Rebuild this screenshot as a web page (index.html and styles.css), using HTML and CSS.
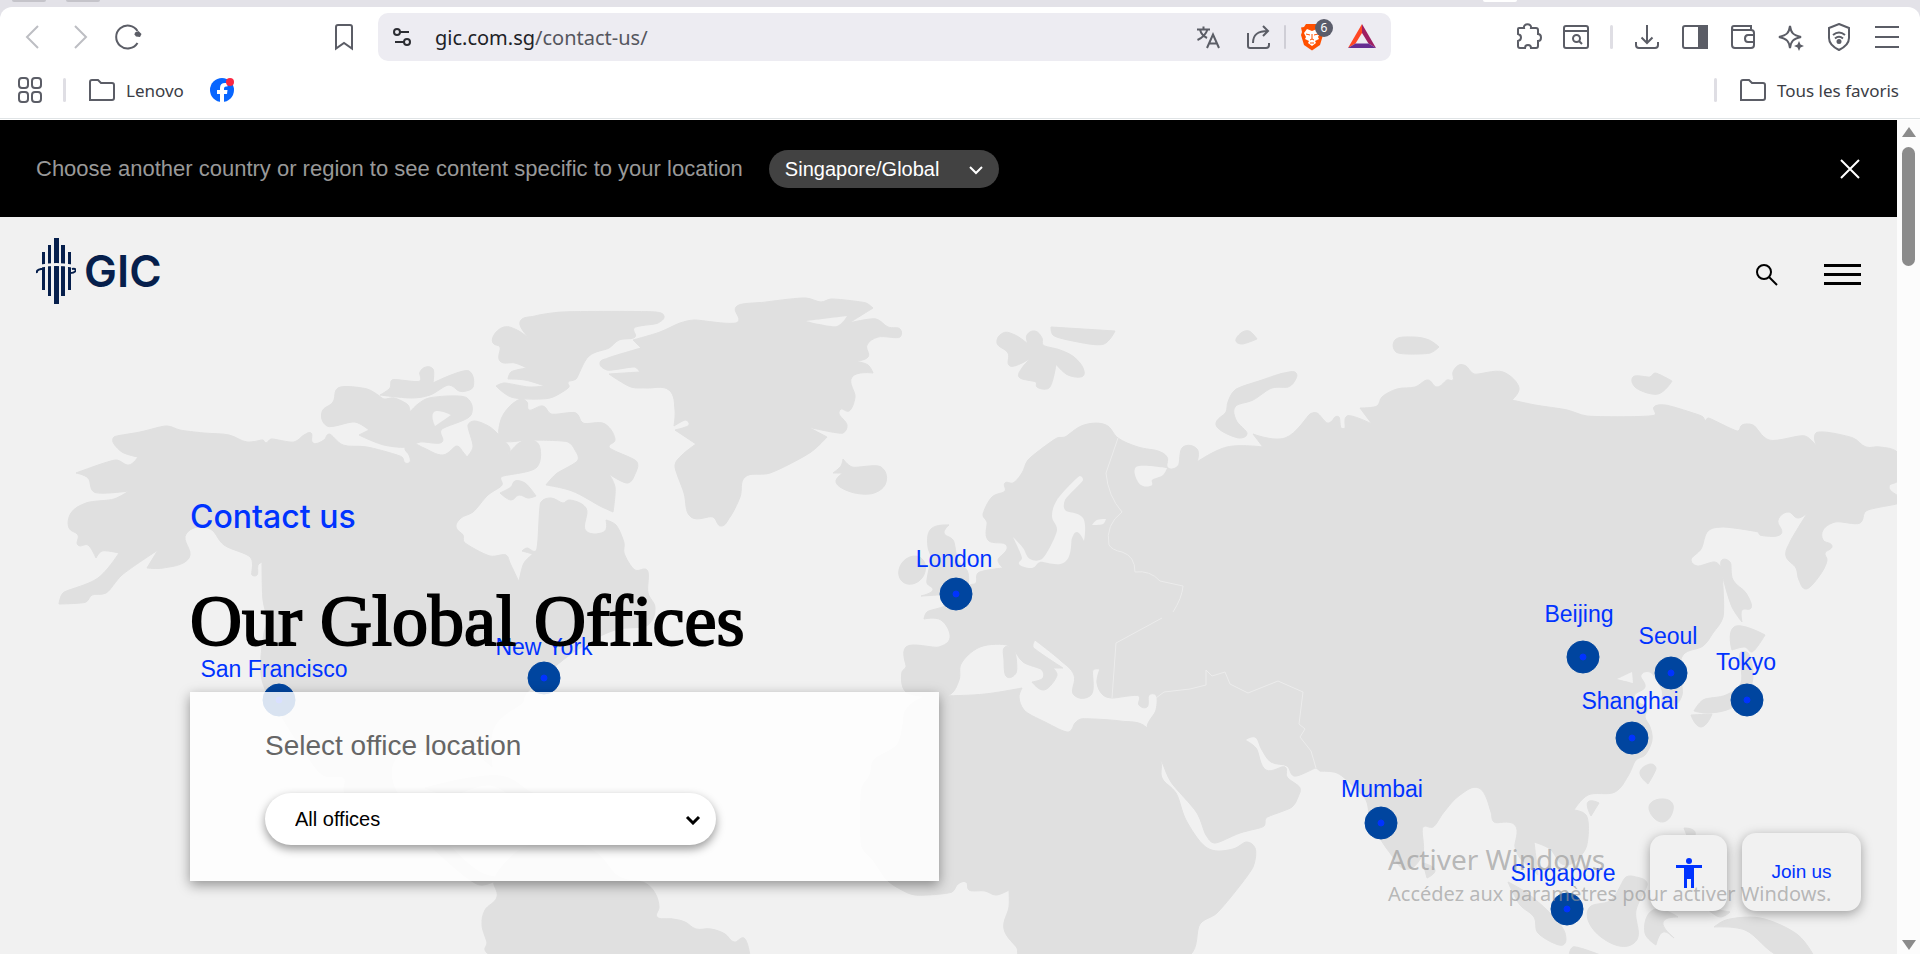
FILE: index.html
```html
<!DOCTYPE html>
<html lang="en">
<head>
<meta charset="utf-8">
<title>Contact us | GIC</title>
<link rel="stylesheet" href="styles.css">
</head>
<body>
<div class="tabstrip"><span class="tab-edge"></span><span class="tab-edge"></span><span class="tab-edge tab-active"></span></div>
<header class="chrome">
  <div class="toolbar">
    <div class="nav-group">
      <button class="icon-btn faded" aria-label="Back"><svg viewBox="0 0 28 28"><path d="M20 3 9 14 20 25"/></svg></button>
      <button class="icon-btn faded" aria-label="Forward"><svg viewBox="0 0 28 28"><path d="M9 3 20 14 9 25"/></svg></button>
      <button class="icon-btn" aria-label="Reload"><svg viewBox="0 0 28 28"><path d="M23.500 20A11.500 11.500 0 1 1 23.500 8"/><path d="M20.500 11.500 21 9.500 24.500 8 27.500 11 26 14 22 13.500Z" fill="#5b5d66" stroke="none"/></svg></button>
    </div>
    <button class="icon-btn" aria-label="Bookmark"><svg viewBox="0 0 28 28"><path d="M6 4Q6 2 8 2H20Q22 2 22 4V25.500L14 20 6 25.500Z"/></svg></button>
    <div class="address">
      <button class="icon-btn dark" aria-label="Site settings"><svg viewBox="0 0 28 28"><circle cx="9" cy="9" r="3"/><path d="M12 9h9M7 19h9"/><circle cx="19" cy="19" r="3"/></svg></button>
      <p class="url">gic.com.sg<span>/contact-us/</span></p>
      <div class="address-tools">
        <button class="icon-btn" aria-label="Translate"><svg viewBox="0 0 28 28"><path d="M3 6.500H16M9.500 3.500V6.500M13.500 6.500C12 11 8 15 3.500 17M6 6.500C7 11 10 13.500 13 15M13 25 19 11.500 25 25M15 20.500H23"/></svg></button>
        <button class="icon-btn" aria-label="Share"><svg viewBox="0 0 28 28"><path d="M4 10V23Q4 25 6 25H22Q25 25 25 22V20M9 20C9 12 13 8 24 8M19 3 24 8 19 13"/></svg></button>
        <span class="divider"></span>
        <button class="icon-btn brave" aria-label="Brave Shields"><svg viewBox="0 0 28 28"><path d="M8 1H20L22 4 25 4.500 24 9 25 12 22 22 14 27.500 6 22 3 12 4 9 3 4.500 6 4Z" fill="#ff5000" stroke="none"/><path d="M9 6 14 8 19 6 22 10 20 14 21 16 17 18 18 20 14 23 10 20 11 18 7 16 8 14 6 10Z" fill="#fff" stroke="none"/><path d="M8 11 12 12M20 11 16 12M14 11V16L12 17M14 16 16 17M12 20H16" stroke="#ff5000" stroke-width="1"/></svg><span class="badge">6</span></button>
        <button class="icon-btn" aria-label="Rewards"><svg viewBox="0 0 28 28"><g stroke="none"><path d="M14 1V10L7.500 20.500 0 25Z" fill="#ff4724"/><path d="M14 1 28 25 20.500 20.500 14 10Z" fill="#9e1f63"/><path d="M0 25 7.500 20.500H20.500L28 25Z" fill="#662d91"/></g></svg></button>
      </div>
    </div>
    <div class="tool-group">
      <button class="icon-btn" aria-label="Extensions"><svg viewBox="0 0 28 28"><path d="M5 5H10C9 0 18 0 17 5H22Q24 5 24 7V11C28 11 28 18 24 18V23Q24 25 22 25H17C17 21 11 21 11 25H6Q4 25 4 23V18C8 17 8 12 4 11V6Q4 5 5 5Z"/></svg></button>
      <button class="icon-btn" aria-label="Search tabs"><svg viewBox="0 0 28 28"><rect x="2" y="3" width="24" height="22" rx="2"/><path d="M2 8H26M17 18 20 21"/><circle cx="14.500" cy="15.500" r="3.500"/></svg></button>
      <span class="divider"></span>
      <button class="icon-btn" aria-label="Downloads"><svg viewBox="0 0 28 28"><path d="M14 2V20M8.500 14.500 14 20 19.500 14.500M3 19V22Q3 25 6 25H22Q25 25 25 22V19"/></svg></button>
      <button class="icon-btn" aria-label="Sidebar"><svg viewBox="0 0 28 28"><rect x="2" y="3" width="24" height="22" rx="2"/><path d="M18 3H26V25H18Z" fill="#5b5d66"/></svg></button>
      <button class="icon-btn" aria-label="Wallet"><svg viewBox="0 0 28 28"><path d="M3 5V22Q3 25 6 25H22Q25 25 25 22V10Q25 7 22 7H5Q3 7 3 5 3 3 5 3H22V7M25 12H19Q16 12 16 15.500 16 19 19 19H25"/></svg></button>
      <button class="icon-btn" aria-label="Assistant"><svg viewBox="0 0 28 28"><path d="M13 3C14 10 16 12 24 14 16 16 14 18 13 25 12 18 10 16 2 14 10 12 12 10 13 3Z"/><path d="M22 18 23.500 21.500 27 23 23.500 24.500 22 28 20.500 24.500 17 23 20.500 21.500Z" fill="#5b5d66" stroke="none"/></svg></button>
      <button class="icon-btn" aria-label="VPN"><svg viewBox="0 0 28 28"><path d="M14 1 24 5V15C24 21 19 24.500 14 27 9 24.500 4 21 4 15V5Z"/><path d="M8 12Q14 7 20 12M10 15.500Q14 12 18 15.500"/><circle cx="14" cy="18.500" r="1.500" fill="#5b5d66"/></svg></button>
      <button class="icon-btn" aria-label="Menu"><svg viewBox="0 0 28 28"><path d="M2 4H26M2 14H26M2 24H26"/></svg></button>
    </div>
  </div>
  <nav class="bookmarks">
    <button class="icon-btn" aria-label="Apps"><svg viewBox="0 0 28 28"><rect x="3" y="2" width="9" height="10" rx="3"/><rect x="16" y="2" width="9" height="10" rx="3"/><rect x="3" y="16" width="9" height="10" rx="3"/><rect x="16" y="16" width="9" height="10" rx="3"/></svg></button>
    <span class="divider"></span>
    <a class="bookmark" href="#"><svg class="folder" viewBox="0 0 28 28"><path d="M2 24V6Q2 4 4 4H10L13 7H24Q26 7 26 9V22Q26 24 24 24Z"/></svg>Lenovo</a>
    <a class="bookmark" href="#" aria-label="Facebook"><svg class="folder" viewBox="0 0 28 28"><g stroke="none"><circle cx="14" cy="14" r="12" fill="#0866ff"/><path d="M12 26V18H9V14H12V12Q12 7 17 7H19.500V10.500H18Q16 10.500 16 12.500V14H19.500L19 18H16V26Z" fill="#fff"/><circle cx="22" cy="6" r="4" fill="#fa2843"/></g></svg></a>
    <span class="divider push"></span>
    <a class="bookmark" href="#"><svg class="folder" viewBox="0 0 28 28"><path d="M2 24V6Q2 4 4 4H10L13 7H24Q26 7 26 9V22Q26 24 24 24Z"/></svg>Tous les favoris</a>
  </nav>
</header>

<div class="viewport">
<main class="page">
  <section class="region-bar">
    <label for="region">Choose another country or region to see content specific to your location</label>
    <div class="select-wrap region-wrap">
      <select id="region"><option>Singapore/Global</option></select>
      <svg viewBox="0 0 16 10"><path d="M2 2 8 8 14 2"/></svg>
    </div>
    <button class="close" aria-label="Close"><svg viewBox="0 0 22 22"><path d="M2 2 20 20M20 2 2 20"/></svg></button>
  </section>

  <section class="hero">
    <svg class="map" viewBox="0 217 1897 737" preserveAspectRatio="xMidYMin slice">
      <g class="land">
        <polygon points="113,442 114,437 140,432 167,426 180,430 204,433 229,435 247,442 263,440 266,443 271,439 294,442 304,435 311,433 313,443 324,440 329,434 343,445 367,447 402,457 405,463 410,462 409,455 405,448 412,443 424,448 443,455 457,446 463,452 467,457 473,447 468,425 474,421 490,427 508,445 510,450 505,458 519,443 531,440 539,445 537,467 501,477 502,485 488,495 473,512 461,518 456,527 463,535 464,542 490,556 506,555 510,563 519,582 524,563 533,554 522,551 527,548 536,551 541,502 551,498 563,503 569,500 586,508 586,531 605,531 606,520 616,525 624,543 624,553 635,570 647,570 648,593 655,608 648,625 615,630 585,645 563,660 540,680 525,695 522,703 494,727 492,767 484,760 470,752 440,752 397,757 397,793 430,815 451,847 481,873 500,878 480,885 440,855 400,815 345,793 344,778 323,775 300,745 282,717 262,680 264,633 267,620 263,600 262,562 258,565 257,575 252,575 251,558 224,545 208,528 186,534 189,558 163,568 147,568 158,550 122,575 106,593 92,595 86,602 59,604 63,593 98,578 119,553 102,551 96,558 88,545 78,545 78,535 69,528 71,513 86,503 114,499 129,491 94,492 88,478 76,473 116,460 129,465 138,457 122,452"/>
        <polygon points="338,388 367,389 378,395 384,399 394,398 408,405 410,412 418,404 429,398 467,398 471,415 441,430 442,442 420,442 408,447 384,445 359,435 369,430 355,422 327,426 322,412 333,402"/>
        <polygon points="392,380 420,381 420,372 426,367 433,369 433,383 469,371 473,387 466,391 459,391 449,385 430,395 412,398 380,395 390,388"/>
        <polygon points="520,322 535,316 562,312 656,312 664,316 658,323 634,328 635,337 619,340 609,348 589,356 576,379 568,382 569,387 553,397 541,399 511,397 496,386 504,383 529,387 545,386 525,380 508,379 511,372 527,368 515,363 500,361 500,347 493,343 494,335 504,327 517,330 531,340"/>
        <polygon points="521,399 527,402 529,410 543,406 551,414 576,413 583,423 605,424 615,440 609,447 637,462 635,474 628,483 609,474 615,487 613,512 600,506 572,491 546,485 556,474 578,460 575,450 568,442 531,440 502,440 500,423 509,407"/>
        <polygon points="515,481 525,483 536,496 528,498 519,495 511,500 500,493 511,487"/>
        <polygon points="633,340 660,332 680,323 694,320 738,322 736,307 766,302 806,298 821,302 831,299 866,303 873,308 849,323 876,319 888,327 900,329 900,337 878,337 867,345 868,357 855,361 868,365 873,373 852,377 855,397 849,411 841,409 839,414 847,425 843,433 808,427 827,437 811,452 770,473 745,477 740,497 730,517 721,526 713,517 691,517 684,493 675,465 682,455 696,444 675,430 689,425 686,420 674,426 675,410 669,390 647,388 631,387 609,374 640,372 635,367 607,370 600,363 608,358 641,348"/>
        <polygon points="843,459 852,467 881,467 886,482 874,493 851,492 836,482 843,473 833,473 841,466"/>
        <polygon points="997,343 1003,333 1015,335 1028,344 1027,335 1035,331 1042,338 1043,345 1060,350 1074,357 1083,368 1083,376 1068,375 1056,364 1049,388 1037,387 1036,382 1019,377 1022,368 1031,358 1010,366 1008,353"/>
        <polygon points="1051,327 1115,331 1104,344 1073,341 1053,335"/>
        <polygon points="1236,341 1241,333 1249,331 1257,339 1242,344"/>
        <polygon points="1395,340 1413,337 1429,340 1439,347 1430,353 1396,352"/>
        <polygon points="1284,373 1296,373 1294,382 1288,387 1272,388 1253,400 1235,407 1236,420 1247,434 1239,438 1216,425 1226,412 1228,402 1235,390 1262,380"/>
        <polygon points="1633,377 1650,377 1655,373 1672,381 1658,394 1635,387"/>
        <polygon points="1084,425 1106,425 1118,438 1138,447 1158,451 1167,457 1168,468 1178,466 1183,447 1197,449 1197,462 1227,447 1263,447 1253,434 1285,438 1310,414 1317,413 1327,423 1332,421 1335,417 1339,417 1341,428 1345,428 1347,416 1372,424 1360,408 1377,406 1382,397 1397,389 1415,387 1428,380 1437,387 1447,380 1453,380 1453,372 1459,365 1466,366 1474,374 1503,372 1519,388 1512,400 1535,405 1567,410 1587,416 1655,415 1654,407 1665,405 1693,413 1703,417 1705,422 1708,418 1738,431 1742,425 1753,425 1769,440 1805,436 1817,447 1816,433 1853,438 1866,447 1880,447 1899,454 1899,480 1889,487 1899,497 1899,503 1866,511 1860,523 1835,522 1823,530 1823,540 1832,546 1825,553 1827,560 1822,572 1806,589 1799,580 1796,568 1786,556 1790,542 1808,512 1798,518 1788,512 1778,520 1781,534 1760,535 1758,532 1722,527 1708,531 1701,549 1691,560 1697,566 1715,562 1721,568 1723,617 1713,633 1703,646 1683,655 1681,675 1682,695 1675,705 1663,706 1662,690 1650,672 1641,675 1645,687 1634,697 1647,708 1645,717 1650,727 1652,740 1645,755 1636,760 1628,776 1615,792 1588,795 1574,810 1586,815 1588,837 1583,853 1565,865 1550,849 1534,842 1538,875 1520,858 1515,847 1515,825 1494,822 1491,812 1479,788 1460,795 1444,812 1433,827 1423,827 1423,853 1412,868 1402,868 1390,853 1381,840 1370,817 1366,800 1355,788 1337,773 1320,771 1316,768 1294,776 1287,766 1271,762 1262,750 1255,737 1245,740 1256,748 1266,770 1285,767 1287,777 1300,788 1298,797 1292,807 1266,818 1264,826 1240,833 1214,843 1206,835 1197,813 1171,782 1162,762 1147,728 1156,710 1156,695 1149,695 1147,707 1139,705 1139,696 1112,698 1103,695 1097,683 1100,669 1093,670 1091,695 1074,695 1074,675 1060,660 1035,640 1033,647 1063,668 1053,668 1057,675 1044,690 1032,682 1043,678 1042,670 1023,662 1014,650 1007,645 980,647 961,664 959,680 949,695 906,692 902,672 906,667 906,647 939,647 950,638 941,620 924,619 927,612 945,606 955,598 970,585 976,583 978,573 1003,568 998,560 1007,546 988,540 987,522 983,515 992,497 1005,491 1005,483 1013,483 1022,473 1028,460 1057,438 1065,437"/>
        <polygon points="1005,647 1014,650 1016,673 1007,677 1004,660"/>
        <polygon points="931,529 949,525 944,533 953,540 958,560 968,573 964,590 921,596 933,590 927,583 931,557 928,547"/>
        <polygon points="902,563 921,558 922,578 903,582"/>
        <polygon points="924,697 906,710 903,725 897,745 874,760 870,775 862,788 862,847 873,860 887,880 900,889 915,895 952,892 958,884 966,882 969,890 985,891 996,895 1009,890 1009,907 1004,929 1017,948 1019,956 1189,956 1200,924 1217,913 1253,867 1255,848 1247,842 1233,849 1209,849 1187,822 1176,793 1162,778 1161,762 1146,727 1120,721 1081,719 1075,723 1069,732 1045,722 1024,710 1019,697 1022,688 985,694 946,696"/>
        <polygon points="494,880 497,897 485,910 482,925 487,943 485,950 492,956 750,956 744,938 734,942 725,934 711,929 696,929 685,922 673,919 657,917 659,907 655,893 645,883 619,877 595,852 560,840 520,850"/>
        <polygon points="425,788 470,778 505,777 530,792 545,798 520,800 490,785 450,795"/>
        <polygon points="1722,560 1730,562 1733,580 1746,593 1751,608 1742,610 1742,622 1732,607 1722,573"/>
        <polygon points="1734,627 1765,635 1752,652 1745,647 1732,650"/>
        <polygon points="1740,653 1748,653 1752,683 1733,707 1707,713 1694,711 1703,700 1726,695 1741,683"/>
        <polygon points="1691,715 1712,714 1701,727"/>
        <polygon points="1640,772 1651,764 1656,768 1648,784"/>
        <polygon points="1588,802 1599,803 1591,816"/>
        <polygon points="1649,807 1661,799 1673,805 1663,822"/>
        <polygon points="1684,828 1695,832 1690,843"/>
        <polygon points="1508,882 1527,893 1552,915 1565,933 1563,945 1538,933 1534,917 1520,905"/>
        <polygon points="1588,910 1611,900 1626,877 1636,877 1647,883 1636,910 1634,943 1601,937"/>
        <polygon points="1653,910 1678,917 1663,922 1674,938 1663,932 1656,945 1645,933"/>
        <polygon points="1706,908 1730,912 1720,917"/>
        <polygon points="1714,927 1726,920 1760,918 1798,935 1814,956 1779,956 1745,930"/>
        <polygon points="1573,947 1603,956 1569,956"/>
        <polygon points="1423,863 1435,870 1427,878"/>
      </g>
      <g class="water">
        <polygon points="434,412 451,415 435,426"/>
        <polygon points="806,321 847,316 837,326"/>
        <polygon points="1013,537 1023,548 1030,559 1042,559 1057,530 1052,516 1057,500 1080,476 1083,480 1065,500 1065,510 1083,518 1084,541 1077,532 1072,538 1065,562 1040,562 1032,568 1019,564 1022,558"/>
        <polygon points="1136,467 1167,468 1163,475 1152,480 1152,485 1143,486 1137,480"/>
        <polygon points="1092,525 1097,520 1106,519 1103,524"/>
        <polygon points="1617,679 1632,672 1633,683"/>
      </g>
      <g class="borders">
        <path d="M1118 438 1106 473Q1108 496 1122 512 1105 525 1109 545 1112 550 1122 552 1135 556 1135 572 1150 570 1160 581L1183 586Q1182 598 1173 612M1162 618 1116 643 1112 698M1156 698 1164 692 1190 689 1206 685 1206 670 1212 676 1225 672 1230 684 1248 693 1278 681 1303 692 1299 724 1305 729 1300 737 1311 751 1316 768"/>
      </g>
      <g class="pins">
        <a href="#"><text x="954" y="567">London</text><circle cx="956" cy="594" r="16"/><circle class="core" cx="956" cy="594" r="3"/></a>
        <a href="#"><text x="544" y="655">New York</text><circle cx="544" cy="678" r="16"/><circle class="core" cx="544" cy="678" r="3"/></a>
        <a href="#"><text x="274" y="677">San Francisco</text><circle cx="279" cy="700" r="16"/><circle class="core" cx="279" cy="700" r="3"/></a>
        <a href="#"><text x="1579" y="622">Beijing</text><circle cx="1583" cy="657" r="16"/><circle class="core" cx="1583" cy="657" r="3"/></a>
        <a href="#"><text x="1668" y="644">Seoul</text><circle cx="1671" cy="673" r="16"/><circle class="core" cx="1671" cy="673" r="3"/></a>
        <a href="#"><text x="1746" y="670">Tokyo</text><circle cx="1747" cy="700" r="16"/><circle class="core" cx="1747" cy="700" r="3"/></a>
        <a href="#"><text x="1630" y="709">Shanghai</text><circle cx="1632" cy="738" r="16"/><circle class="core" cx="1632" cy="738" r="3"/></a>
        <a href="#"><text x="1382" y="797">Mumbai</text><circle cx="1381" cy="823" r="16"/><circle class="core" cx="1381" cy="823" r="3"/></a>
        <a href="#"><text x="1563" y="881">Singapore</text><circle cx="1567" cy="909" r="16"/><circle class="core" cx="1567" cy="909" r="3"/></a>
      </g>
    </svg>

    <div class="content">
      <header class="site-header">
        <a class="logo" href="#"><svg viewBox="0 0 40 66"><path d="M18 0h5v66h-5zM12 7h3v51h-3zM25 7h4v51h-4zM6 14h3v38h-3zM32 14h3v38h-3z" fill="#061f4c"/><path d="M5 28Q20 25 36 28" stroke="#f1f1f1" stroke-width="3" fill="none"/><path d="M9 31H5Q0 32 1 35M34 35Q39 35 40 32 39 30 36 31" stroke="#061f4c" stroke-width="2" fill="none"/></svg><span>GIC</span></a>
        <div class="header-actions">
          <button class="search" aria-label="Search"><svg viewBox="0 0 24 24"><circle cx="9" cy="9" r="7"/><path d="M14 14 22 22"/></svg></button>
          <button class="menu" aria-label="Menu"><span></span><span></span><span></span></button>
        </div>
      </header>
      <div class="intro">
        <p class="eyebrow">Contact us</p>
        <h1>Our Global Offices</h1>
        <form class="card">
          <label for="office">Select office location</label>
          <div class="select-wrap office-wrap">
            <select id="office"><option>All offices</option></select>
            <svg viewBox="0 0 16 10"><path d="M2 2 8 8 14 2"/></svg>
          </div>
        </form>
      </div>
    </div>

    <div class="floating">
      <button class="float-btn access" aria-label="Accessibility"><svg viewBox="0 0 28 32"><circle cx="14" cy="4" r="3"/><path d="M1 8H27V11H19V31H16V22H12V31H9V11H1Z"/></svg></button>
      <a class="float-btn join" href="#">Join us</a>
    </div>
    <div class="watermark"><p class="wm-title">Activer Windows</p><p class="wm-text">Accédez aux paramètres pour activer Windows.</p></div>
  </section>
</main>
<div class="scrollbar"><span class="arrow up"></span><span class="thumb"></span><span class="arrow down"></span></div>
</div>
<script src="map.js"></script>
</body>
</html>
```
FILE: map.js
```js
// Rounds the coastlines: each polygon becomes a closed curve through its points.
// Very sharp corners keep a zero tangent so headlands stay pointed.
document.querySelectorAll('.land polygon, .water polygon').forEach(function (shape) {
  var pts = shape.getAttribute('points').trim().split(/\s+/).map(function (pair) {
    return pair.split(',').map(Number);
  });
  var n = pts.length;
  var at = function (i) { return pts[(i + n) % n]; };
  var tangent = function (i) {
    var a = at(i - 1), b = at(i), c = at(i + 1);
    var d1 = Math.hypot(b[0] - a[0], b[1] - a[1]);
    var d2 = Math.hypot(c[0] - b[0], c[1] - b[1]);
    var cos = ((b[0] - a[0]) * (c[0] - b[0]) + (b[1] - a[1]) * (c[1] - b[1])) / (d1 * d2);
    if (cos < -0.3) return [0, 0];
    var x = (b[0] - a[0]) / d1 + (c[0] - b[0]) / d2;
    var y = (b[1] - a[1]) / d1 + (c[1] - b[1]) / d2;
    var len = Math.hypot(x, y) || 1;
    var reach = Math.min(d1, d2) * 0.38;
    return [x / len * reach, y / len * reach];
  };
  var d = 'M' + pts[0].join(' ');
  for (var i = 0; i < n; i++) {
    var p = at(i), q = at(i + 1), t = tangent(i), u = tangent(i + 1);
    d += 'C' + [p[0] + t[0], p[1] + t[1], q[0] - u[0], q[1] - u[1], q[0], q[1]].join(' ');
  }
  var path = document.createElementNS('http://www.w3.org/2000/svg', 'path');
  path.setAttribute('d', d + 'Z');
  shape.replaceWith(path);
});
```
FILE: styles.css
```css
* { box-sizing: border-box; margin: 0; padding: 0; }
body {
  min-height: 100vh;
  display: flex;
  flex-direction: column;
  background: #e3e2e8;
  font-family: "Liberation Sans", Arial, sans-serif;
}
button { border: 0; background: none; font: inherit; cursor: pointer; }
a { text-decoration: none; }

/* Browser frame */
.tabstrip { display: flex; gap: 20px; height: 7px; padding-left: 12px; }
.tab-edge { width: 34px; height: 2px; background: #c5c4ca; border-radius: 0 0 4px 4px; }
.tab-active { background: #fff; margin-left: auto; margin-right: 403px; }
.chrome {
  background: #fff;
  border-radius: 12px 12px 0 0;
  border-bottom: 1px solid #e0e4e6;
  font-family: "Noto Sans", "Open Sans", sans-serif;
  color: #3b3d45;
  height: 112px;
  padding-top: 6px;
}
.toolbar { display: flex; align-items: center; height: 48px; padding: 0 19px 0 18px; }
.nav-group { display: flex; gap: 20px; margin-right: 188px; }
.icon-btn { position: relative; flex: none; width: 28px; height: 28px; }
.icon-btn svg, .folder { display: block; width: 28px; height: 28px; fill: none; stroke: #5b5d66; stroke-width: 2; }
.icon-btn.faded svg { stroke: #bdbec3; }
.icon-btn.dark svg { stroke: #2c2d33; }
.address {
  flex: 1;
  display: flex;
  align-items: center;
  height: 48px;
  margin: 0 123px 0 20px;
  padding: 0 15px 0 10px;
  border-radius: 10px;
  background: #edecf2;
}
.url { flex: 1; padding-left: 19px; font-size: 20px; color: #202126; }
.url span { color: #55565e; }
.address-tools { display: flex; align-items: center; gap: 22px; }
.address-tools .divider { width: 2px; margin: 0 -10px; background: #cfced6; }
.divider { flex: none; width: 3px; height: 24px; background: #dfdee4; border-radius: 2px; }
.badge {
  position: absolute;
  left: 17px;
  top: -4px;
  width: 18px;
  height: 18px;
  border-radius: 50%;
  background: #5b5d6b;
  color: #fff;
  font-size: 12px;
  line-height: 18px;
}
.tool-group { display: flex; align-items: center; gap: 20px; }
.bookmarks { display: flex; align-items: center; height: 58px; padding: 0 21px 0 16px; }
.bookmarks > .divider { margin: 0 22px 0 19px; }
.bookmarks .divider.push { margin-left: auto; }
.bookmark { display: flex; align-items: center; gap: 10px; margin-right: 24px; color: #3b3d45; font-size: 17px; }
.bookmark:last-child { margin-right: 0; }

/* Page area */
.viewport { flex: 1; display: flex; background: #fcfcfc; border-top: 1px solid #fff; }
.page { flex: 1; min-width: 0; display: flex; flex-direction: column; }
.region-bar {
  display: flex;
  align-items: center;
  gap: 26px;
  min-height: 97px;
  padding: 0 36px;
  background: #000;
  color: #999;
  font-size: 22px;
}
.select-wrap { position: relative; }
.select-wrap select { width: 100%; appearance: none; border: 0; font-family: inherit; font-size: 20px; }
.select-wrap svg { position: absolute; top: 50%; height: 10px; width: 16px; margin-top: -4px; fill: none; stroke-width: 2; pointer-events: none; }
.region-wrap { width: 230px; }
.region-wrap select { height: 38px; padding: 0 16px; border-radius: 19px; background: #424242; color: #fff; }
.region-wrap svg { right: 15px; stroke: #fff; }
.close { margin-left: auto; width: 22px; height: 22px; }
.close svg { display: block; fill: none; stroke: #fff; stroke-width: 2; }

.hero { position: relative; flex: 1; min-height: 737px; background: #f1f1f1; overflow: hidden; }
.map { position: absolute; inset: 0; width: 100%; height: 100%; }
.land { fill: #e0e0e0; stroke: #e0e0e0; stroke-width: 1; stroke-linejoin: round; }
.water { fill: #f1f1f1; }
.borders { fill: none; stroke: #ececec; stroke-width: 1; }
.pins text { fill: #03f; font-size: 23px; text-anchor: middle; }
.pins circle { fill: #00459f; stroke: #00459f; stroke-width: 1; }
.pins .core { fill: #03f; stroke: #03f; }

.content { position: relative; pointer-events: none; }
.content a, .content button, .content form { pointer-events: auto; }
.site-header { display: flex; justify-content: space-between; align-items: center; padding: 21px 36px 0; }
.logo { display: flex; align-items: center; gap: 8px; color: #061f4c; font: 600 44px/66px Inter, sans-serif; }
.logo svg { width: 40px; height: 66px; }
.header-actions { display: flex; align-items: center; gap: 45px; padding-top: 7px; }
.search { width: 24px; height: 24px; }
.search svg { display: block; fill: none; stroke: #000; stroke-width: 2; }
.menu { display: flex; flex-direction: column; gap: 6px; width: 37px; }
.menu span { height: 3px; background: #000; }

.intro { padding: 191px 36px 0 190px; }
.eyebrow { font: 500 32px/44px Inter, sans-serif; color: #03f; }
h1 { padding-top: 42px; font: 400 72px/80px "Liberation Serif", serif; color: #000; -webkit-text-stroke: 2px #000; }
.card {
  width: 749px;
  max-width: 100%;
  margin-top: 31px;
  padding: 37px 75px 36px;
  background: rgba(255, 255, 255, 0.85);
  box-shadow: 0 4px 12px rgba(0, 0, 0, 0.4);
}
.card label { display: block; font-size: 28px; line-height: 34px; color: #666; }
.office-wrap { width: 451px; max-width: 100%; margin-top: 30px; }
.office-wrap select { display: block; height: 52px; padding: 0 30px; border-radius: 26px; background: #fff; color: #000; box-shadow: 0 4px 10px rgba(0, 0, 0, 0.4); }
.office-wrap svg { right: 15px; stroke: #000; stroke-width: 3; }

.floating { position: absolute; right: 36px; bottom: 43px; display: flex; align-items: flex-end; gap: 15px; }
.float-btn {
  display: grid;
  place-items: center;
  width: 77px;
  height: 76px;
  border-radius: 14px;
  background: #f1f1f1;
  box-shadow: 0 3px 12px rgba(0, 0, 0, 0.35);
}
.access svg { width: 28px; height: 32px; fill: #03f; }
.join { width: 119px; height: 78px; color: #03f; font-size: 19px; }
.watermark { position: absolute; right: 50px; bottom: 44px; width: 459px; white-space: nowrap; color: rgba(150, 150, 150, 0.65); font-family: "Noto Sans", sans-serif; pointer-events: none; }
.wm-title { font-size: 28px; line-height: 38px; }
.wm-text { font-size: 20px; line-height: 32px; }

.scrollbar { width: 23px; flex: none; display: flex; flex-direction: column; align-items: center; padding: 7px 0 4px; }
.arrow { border: 7px solid transparent; border-top-width: 0; border-bottom: 10px solid #8b8b8b; }
.thumb { width: 13px; height: 119px; margin-top: 10px; border-radius: 7px; background: #8b8b8b; }
.down { margin-top: auto; transform: rotate(180deg); }
```
